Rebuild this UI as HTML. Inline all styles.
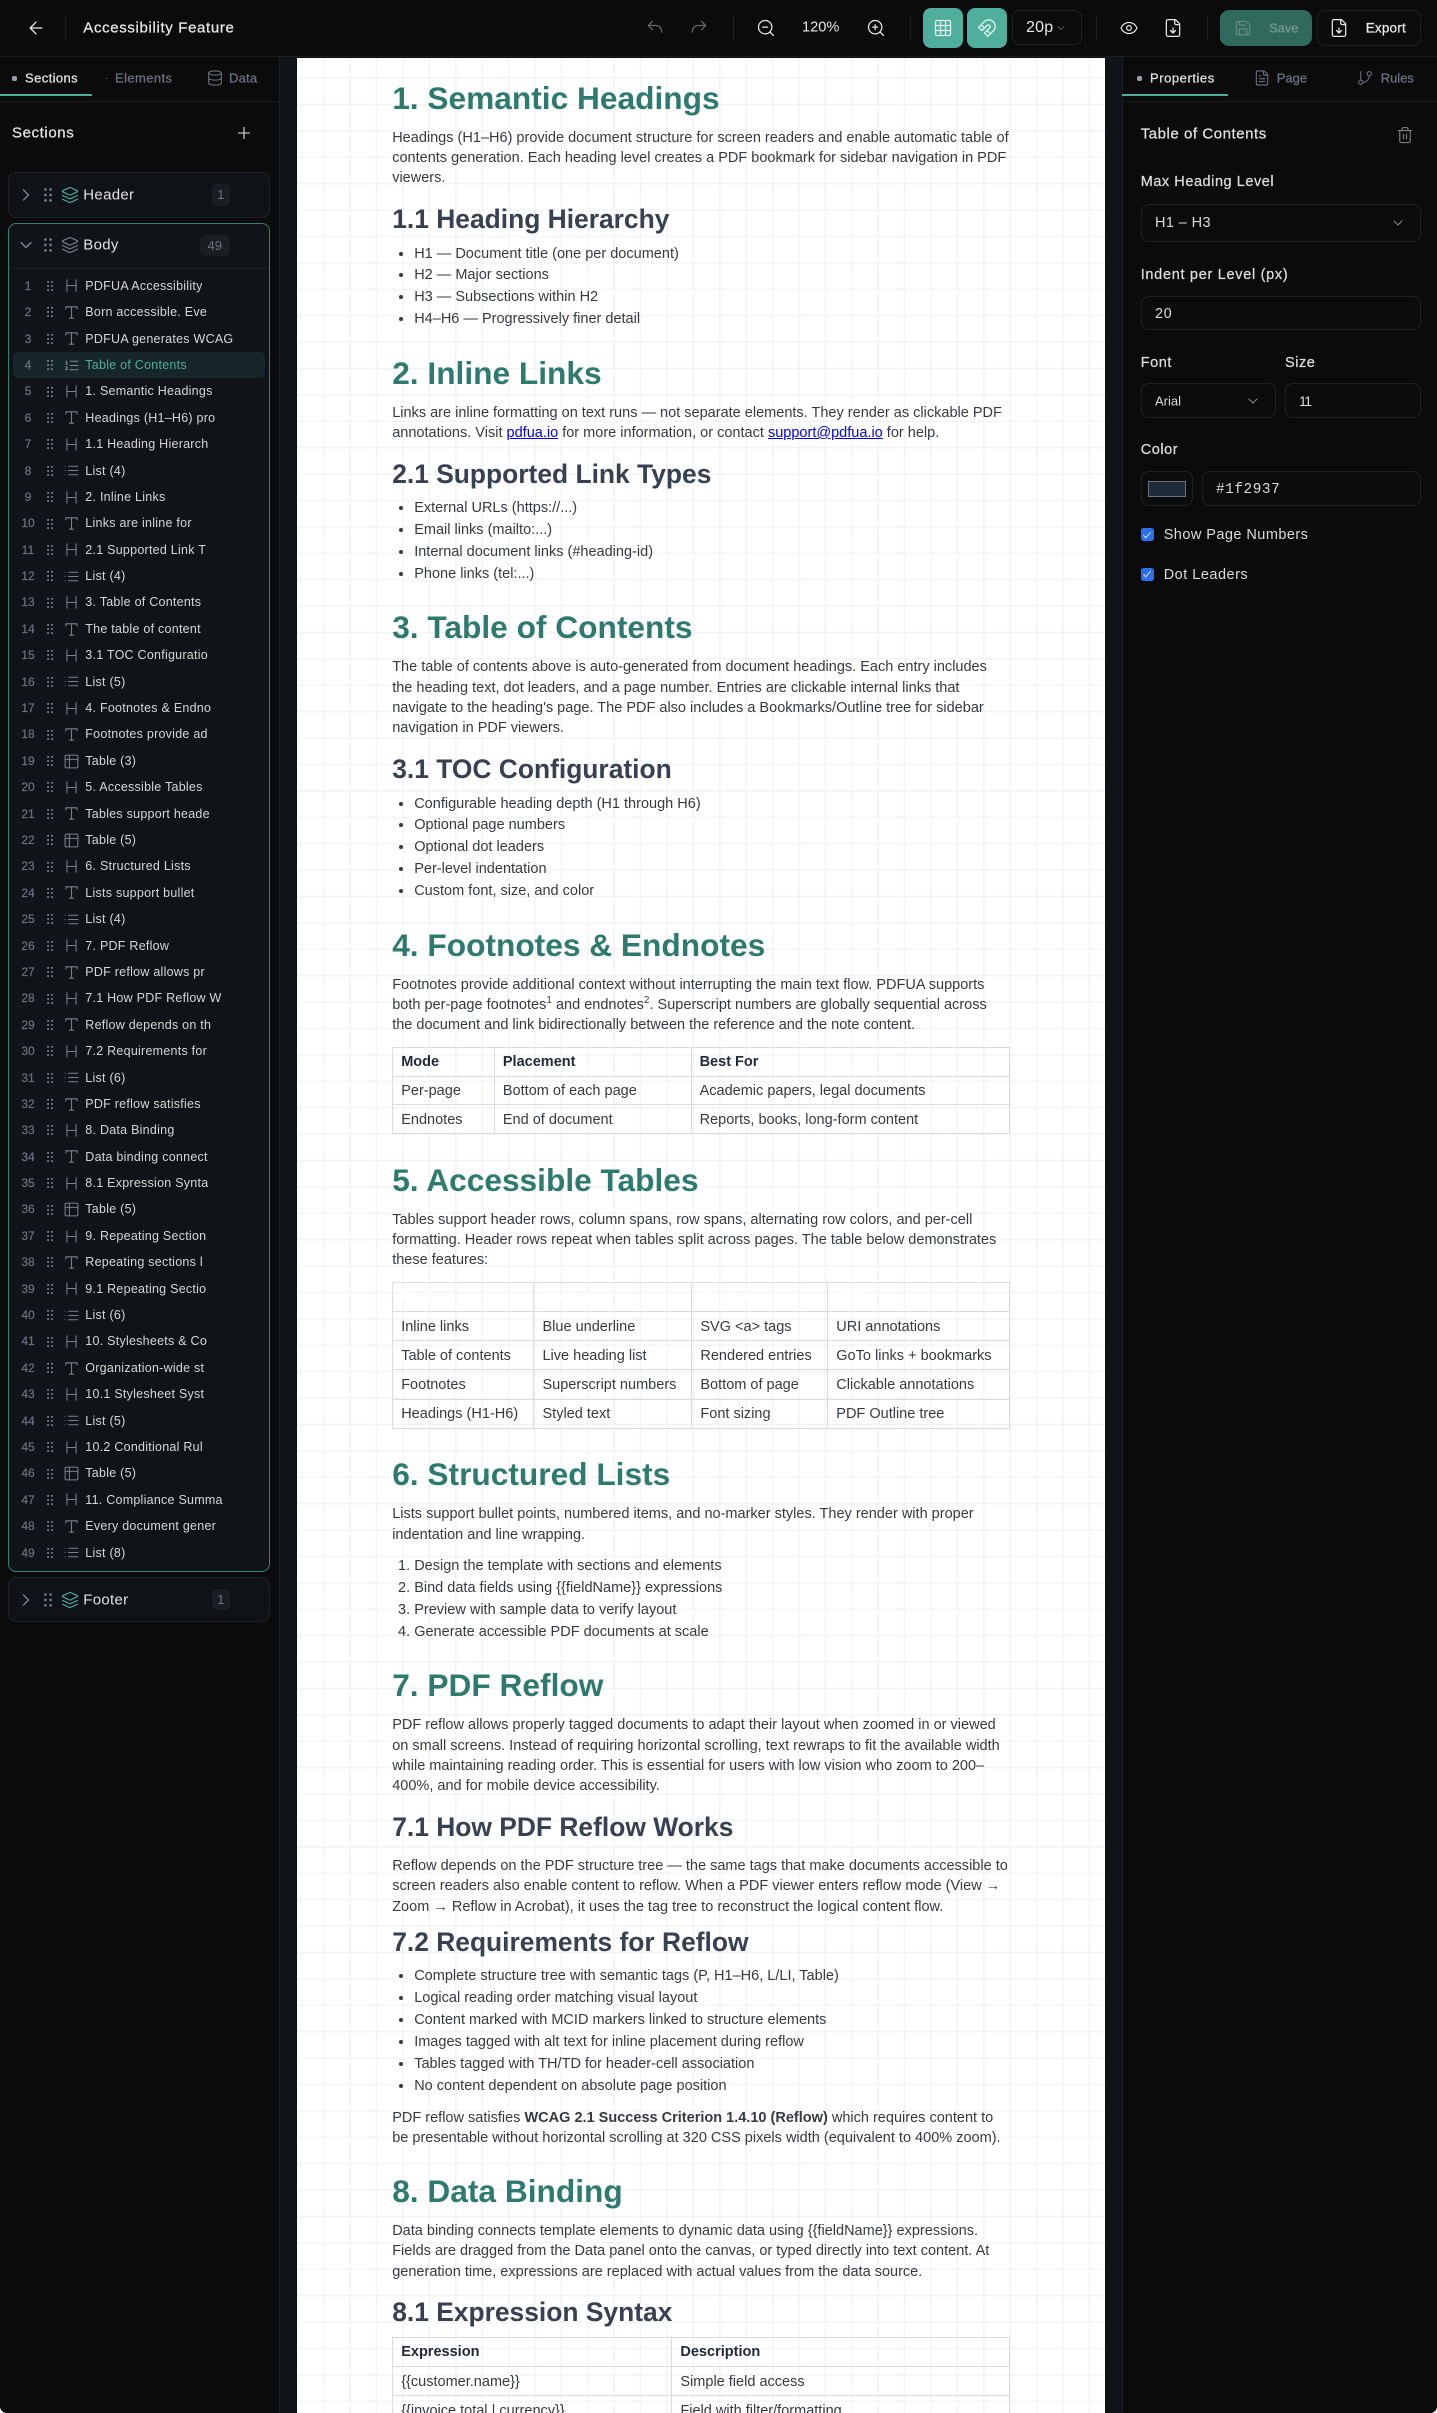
<!DOCTYPE html>
<html lang="en">
<head>
<meta charset="utf-8">
<title>Accessibility Feature</title>
<style>
html,body{margin:0;padding:0;background:#fff}
body{width:1437px;height:2413px;overflow:hidden;font-family:"Liberation Sans",Arial,sans-serif}
#app{position:absolute;left:0;top:0;width:1437px;height:2413px;overflow:hidden;background:#0b0b0c;border-radius:0 0 7px 7px}
.t{position:absolute;white-space:nowrap;transform:translateY(-50%);line-height:1}
.m{-webkit-text-stroke:.25px currentColor}
.i{position:absolute;transform:translate(-50%,-50%);fill:none;stroke:currentColor;stroke-width:1.5;stroke-linecap:round;stroke-linejoin:round;overflow:visible}
.box{position:absolute;box-sizing:border-box}
.fld{position:absolute;box-sizing:border-box;border:1px solid #1f2124;border-radius:8px;background:#0b0b0c}
#canvas{position:absolute;left:297.4px;top:57.5px;width:807.6px;height:2356px;background:#fff;overflow:hidden}
#canvas>svg{position:absolute;left:0;top:0}
#doc{position:absolute;left:94.8px;top:21px;width:618px;font-size:14.52px;line-height:20.4px;color:#353a42;white-space:nowrap}
#doc h1{font-size:31.68px;line-height:38px;margin:22.4px 0 11px;color:#2f7a6e;font-weight:bold}
#doc h2{font-size:26.4px;line-height:32px;margin:14.5px 0 8.3px;color:#374151;font-weight:bold}
#doc p{margin:0 0 11px}
#doc ul,#doc ol{margin:0 0 11px;padding:0 0 0 22px}
#doc li{line-height:21.9px}
#doc a{color:#0000ee;text-decoration:underline}
#doc sup{font-size:10px;line-height:0}
#doc table{border-collapse:collapse;table-layout:fixed;width:618px;margin:11px 0 26.5px}
#doc td,#doc th{border:1.3px solid #d9dbe3;height:29.2px;padding:1px 8px 0;box-sizing:border-box;text-align:left;font-size:14.52px;line-height:18px;overflow:hidden}
#doc table.a td,#doc table.a th{height:28.8px}
#doc th{color:#1f2937;font-weight:bold}
#doc th.w{color:#fff}
#rows{position:absolute;left:0;top:272.8px;width:279px}
.r{height:26.4px;position:relative;color:#d6d6d6;font-size:12.5px;letter-spacing:.25px}
.r b{position:absolute;left:14px;width:28px;text-align:center;top:7px;line-height:13px;font-size:12px;font-weight:normal;letter-spacing:0;color:#6b7280;-webkit-text-stroke:.2px #6b7280}
.r svg.g{position:absolute;left:47px;top:8.2px;width:6px;height:10px;fill:#858a91}
.r svg.k{position:absolute;left:62.5px;top:4.7px;width:17px;height:17px;fill:none;stroke:#7b8087;stroke-width:1.5;stroke-linecap:round;stroke-linejoin:round}
.r span{position:absolute;left:85.3px;top:6px;line-height:14px;white-space:nowrap}
.r.s{color:#4fae9c}
.r.s:before{content:"";position:absolute;left:12.5px;right:14px;top:0;bottom:0;background:#16262a;border-radius:5px}
.r.s svg.k{stroke:#7b8a8d}
.card{position:absolute;left:8px;width:262px;box-sizing:border-box;border:1px solid #1e2125;border-radius:8px;background:#0f1216}
.badge{position:absolute;height:21.5px;background:#1a1e22;border-radius:5px;color:#6b7280;font-size:13px;line-height:21.5px;text-align:center}
.cb{position:absolute;left:1140.7px;width:13px;height:13px;background:#2f6fed;border-radius:2.5px}
.cb svg{position:absolute;left:1.5px;top:1.5px;width:10px;height:10px;fill:none;stroke:#fff;stroke-width:2;stroke-linecap:round;stroke-linejoin:round}
</style>
</head>
<body>
<svg width="0" height="0" style="position:absolute">
<symbol id="back" viewBox="0 0 24 24"><path d="M19 12H5M12 19l-7-7 7-7"/></symbol>
<symbol id="undo" viewBox="0 0 24 24"><path d="M9 14 4 9l5-5"/><path d="M4 9h9a7 7 0 0 1 7 7v1"/></symbol>
<symbol id="redo" viewBox="0 0 24 24"><path d="m15 14 5-5-5-5"/><path d="M20 9h-9a7 7 0 0 0-7 7v1"/></symbol>
<symbol id="zout" viewBox="0 0 24 24"><circle cx="11" cy="11" r="8"/><path d="m21 21-4.3-4.3M8 11h6"/></symbol>
<symbol id="zin" viewBox="0 0 24 24"><circle cx="11" cy="11" r="8"/><path d="m21 21-4.3-4.3M8 11h6M11 8v6"/></symbol>
<symbol id="grid" viewBox="0 0 24 24"><rect x="3" y="3" width="18" height="18" rx="2"/><path d="M3 9h18M3 15h18M9 3v18M15 3v18"/></symbol>
<symbol id="magnet" viewBox="0 0 24 24"><path d="m6 15-4-4 6.75-6.77a7.79 7.79 0 0 1 11 11L13 22l-4-4 6.39-6.36a2.14 2.14 0 0 0-3-3L6 15"/><path d="m5 8 4 4M12 15l4 4"/></symbol>
<symbol id="eye" viewBox="0 0 24 24"><path d="M2.062 12.348a1 1 0 0 1 0-.696 10.75 10.75 0 0 1 19.876 0 1 1 0 0 1 0 .696 10.75 10.75 0 0 1-19.876 0"/><circle cx="12" cy="12" r="3"/></symbol>
<symbol id="fdown" viewBox="0 0 24 24"><path d="M15 2H6a2 2 0 0 0-2 2v16a2 2 0 0 0 2 2h12a2 2 0 0 0 2-2V7Z"/><path d="M14 2v4a2 2 0 0 0 2 2h4M12 18v-6M9 15l3 3 3-3"/></symbol>
<symbol id="save" viewBox="0 0 24 24"><path d="M15.2 3a2 2 0 0 1 1.4.6l3.8 3.8a2 2 0 0 1 .6 1.4V19a2 2 0 0 1-2 2H5a2 2 0 0 1-2-2V5a2 2 0 0 1 2-2z"/><path d="M17 21v-7a1 1 0 0 0-1-1H8a1 1 0 0 0-1 1v7M7 3v4a1 1 0 0 0 1 1h7"/></symbol>
<symbol id="db" viewBox="0 0 24 24"><ellipse cx="12" cy="5" rx="9" ry="3"/><path d="M3 5V19A9 3 0 0 0 21 19V5M3 12A9 3 0 0 0 21 12"/></symbol>
<symbol id="plus" viewBox="0 0 24 24"><path d="M5 12h14M12 5v14"/></symbol>
<symbol id="cr" viewBox="0 0 24 24"><path d="m9 18 6-6-6-6"/></symbol>
<symbol id="cd" viewBox="0 0 24 24"><path d="m6 9 6 6 6-6"/></symbol>
<symbol id="layers" viewBox="0 0 24 24"><path d="m12.83 2.18a2 2 0 0 0-1.66 0L2.6 6.08a1 1 0 0 0 0 1.83l8.58 3.91a2 2 0 0 0 1.66 0l8.58-3.9a1 1 0 0 0 0-1.83z"/><path d="m22 17.65-9.17 4.16a2 2 0 0 1-1.66 0L2 17.65M22 12.65l-9.17 4.16a2 2 0 0 1-1.66 0L2 12.65"/></symbol>
<symbol id="grip" viewBox="0 0 6 10"><rect x=".2" y="0" width="1.7" height="1.7"/><rect x="4.1" y="0" width="1.7" height="1.7"/><rect x=".2" y="4.1" width="1.7" height="1.7"/><rect x="4.1" y="4.1" width="1.7" height="1.7"/><rect x=".2" y="8.2" width="1.7" height="1.7"/><rect x="4.1" y="8.2" width="1.7" height="1.7"/></symbol>
<symbol id="h" viewBox="0 0 24 24"><path d="M5.5 12h13M5.5 20V4M18.5 20V4"/></symbol>
<symbol id="ty" viewBox="0 0 24 24"><path d="M4 7V4h16v3M9 20h6M12 4v16"/></symbol>
<symbol id="li" viewBox="0 0 24 24"><path d="M3 12h.01M3 18h.01M3 6h.01M8 12h13M8 18h13M8 6h13"/></symbol>
<symbol id="ol" viewBox="0 0 24 24"><path d="M10 12h11M10 18h11M10 6h11M4 10h2M4 6h1v4M6 18H4c0-1 2-2 2-3s-1-1.5-2-1"/></symbol>
<symbol id="tb" viewBox="0 0 24 24"><path d="M9 3H5a2 2 0 0 0-2 2v4m6-6h10a2 2 0 0 1 2 2v4M9 3v18m0 0h10a2 2 0 0 0 2-2V9M9 21H5a2 2 0 0 1-2-2V9m0 0h18"/></symbol>
<symbol id="ftext" viewBox="0 0 24 24"><path d="M15 2H6a2 2 0 0 0-2 2v16a2 2 0 0 0 2 2h12a2 2 0 0 0 2-2V7Z"/><path d="M14 2v4a2 2 0 0 0 2 2h4M10 9H8M16 13H8M16 17H8"/></symbol>
<symbol id="branch" viewBox="0 0 24 24"><path d="M6 3v12"/><circle cx="18" cy="6" r="3"/><circle cx="6" cy="18" r="3"/><path d="M18 9a9 9 0 0 1-9 9"/></symbol>
<symbol id="trash" viewBox="0 0 24 24"><path d="M3 6h18M19 6v14c0 1-1 2-2 2H7c-1 0-2-1-2-2V6M8 6V4c0-1 1-2 2-2h4c1 0 2 1 2 2v2M10 11v6M14 11v6"/></symbol>
</svg>

<div id="app">

<!-- canvas -->
<div class="box" style="left:279px;top:57px;width:18.4px;height:2356px;background:#0f1418"></div>
<div class="box" style="left:1105px;top:57px;width:17.3px;height:2356px;background:#0f1418"></div>
<div id="canvas">
<svg width="808" height="2356"><defs><pattern id="gp" width="26.4" height="26.4" patternUnits="userSpaceOnUse" x="-0.4" y="-7.1"><path d="M0 0H26.4M0 0V26.4" stroke="#f4f4f6" stroke-width="3.2" fill="none"/></pattern></defs><rect width="808" height="2356" fill="url(#gp)"/></svg>
<div id="doc">
<h1 style="margin-top:0">1. Semantic Headings</h1>
<p>Headings (H1–H6) provide document structure for screen readers and enable automatic table of<br>contents generation. Each heading level creates a PDF bookmark for sidebar navigation in PDF<br>viewers.</p>
<h2>1.1 Heading Hierarchy</h2>
<ul><li>H1 — Document title (one per document)</li><li>H2 — Major sections</li><li>H3 — Subsections within H2</li><li>H4–H6 — Progressively finer detail</li></ul>
<h1>2. Inline Links</h1>
<p>Links are inline formatting on text runs — not separate elements. They render as clickable PDF<br>annotations. Visit <a>pdfua.io</a> for more information, or contact <a>support@pdfua.io</a> for help.</p>
<h2>2.1 Supported Link Types</h2>
<ul><li>External URLs (https://...)</li><li>Email links (mailto:...)</li><li>Internal document links (#heading-id)</li><li>Phone links (tel:...)</li></ul>
<h1>3. Table of Contents</h1>
<p>The table of contents above is auto-generated from document headings. Each entry includes<br>the heading text, dot leaders, and a page number. Entries are clickable internal links that<br>navigate to the heading's page. The PDF also includes a Bookmarks/Outline tree for sidebar<br>navigation in PDF viewers.</p>
<h2>3.1 TOC Configuration</h2>
<ul><li>Configurable heading depth (H1 through H6)</li><li>Optional page numbers</li><li>Optional dot leaders</li><li>Per-level indentation</li><li>Custom font, size, and color</li></ul>
<h1>4. Footnotes &amp; Endnotes</h1>
<p>Footnotes provide additional context without interrupting the main text flow. PDFUA supports<br>both per-page footnotes<sup>1</sup> and endnotes<sup>2</sup>. Superscript numbers are globally sequential across<br>the document and link bidirectionally between the reference and the note content.</p>
<table class="a">
<colgroup><col style="width:101.7px"><col style="width:196.7px"><col></colgroup>
<tr><th>Mode</th><th>Placement</th><th>Best For</th></tr>
<tr><td>Per-page</td><td>Bottom of each page</td><td>Academic papers, legal documents</td></tr>
<tr><td>Endnotes</td><td>End of document</td><td>Reports, books, long-form content</td></tr>
</table>
<h1>5. Accessible Tables</h1>
<p>Tables support header rows, column spans, row spans, alternating row colors, and per-cell<br>formatting. Header rows repeat when tables split across pages. The table below demonstrates<br>these features:</p>
<table>
<colgroup><col style="width:141.3px"><col style="width:157.9px"><col style="width:135.9px"><col></colgroup>
<tr><th class="w">Feature</th><th class="w">Markup</th><th class="w">Render</th><th class="w">PDF</th></tr>
<tr><td>Inline links</td><td>Blue underline</td><td>SVG &lt;a&gt; tags</td><td>URI annotations</td></tr>
<tr><td>Table of contents</td><td>Live heading list</td><td>Rendered entries</td><td>GoTo links + bookmarks</td></tr>
<tr><td>Footnotes</td><td>Superscript numbers</td><td>Bottom of page</td><td>Clickable annotations</td></tr>
<tr><td>Headings (H1-H6)</td><td>Styled text</td><td>Font sizing</td><td>PDF Outline tree</td></tr>
</table>
<h1>6. Structured Lists</h1>
<p>Lists support bullet points, numbered items, and no-marker styles. They render with proper<br>indentation and line wrapping.</p>
<ol><li>Design the template with sections and elements</li><li>Bind data fields using {{fieldName}} expressions</li><li>Preview with sample data to verify layout</li><li>Generate accessible PDF documents at scale</li></ol>
<h1>7. PDF Reflow</h1>
<p>PDF reflow allows properly tagged documents to adapt their layout when zoomed in or viewed<br>on small screens. Instead of requiring horizontal scrolling, text rewraps to fit the available width<br>while maintaining reading order. This is essential for users with low vision who zoom to 200–<br>400%, and for mobile device accessibility.</p>
<h2>7.1 How PDF Reflow Works</h2>
<p style="margin-top:12.5px;margin-bottom:6px">Reflow depends on the PDF structure tree — the same tags that make documents accessible to<br>screen readers also enable content to reflow. When a PDF viewer enters reflow mode (View →<br>Zoom → Reflow in Acrobat), it uses the tag tree to reconstruct the logical content flow.</p>
<h2 style="margin-top:8.9px">7.2 Requirements for Reflow</h2>
<ul style="margin-bottom:10px"><li>Complete structure tree with semantic tags (P, H1–H6, L/LI, Table)</li><li>Logical reading order matching visual layout</li><li>Content marked with MCID markers linked to structure elements</li><li>Images tagged with alt text for inline placement during reflow</li><li>Tables tagged with TH/TD for header-cell association</li><li>No content dependent on absolute page position</li></ul>
<p style="margin-bottom:12px">PDF reflow satisfies <b>WCAG 2.1 Success Criterion 1.4.10 (Reflow)</b> which requires content to<br>be presentable without horizontal scrolling at 320 CSS pixels width (equivalent to 400% zoom).</p>
<h1 style="margin-top:23.4px">8. Data Binding</h1>
<p>Data binding connects template elements to dynamic data using {{fieldName}} expressions.<br>Fields are dragged from the Data panel onto the canvas, or typed directly into text content. At<br>generation time, expressions are replaced with actual values from the data source.</p>
<h2>8.1 Expression Syntax</h2>
<table style="margin-top:6px">
<colgroup><col style="width:279.2px"><col></colgroup>
<tr><th>Expression</th><th>Description</th></tr>
<tr><td>{{customer.name}}</td><td>Simple field access</td></tr>
<tr><td>{{invoice.total | currency}}</td><td>Field with filter/formatting</td></tr>
</table>
</div>
</div>

<!-- top bar -->
<div class="box" style="left:0;top:0;width:1437px;height:57px;background:#0b0b0c;border-bottom:1px solid #1b1c1e"></div>
<svg class="i" style="left:35.7px;top:28px;width:20px;height:20px;color:#eaeaea"><use href="#back"/></svg>
<div class="box" style="left:64.5px;top:15px;width:1px;height:26px;background:#1c1d1f"></div>
<div class="t m" style="left:83.3px;top:28px;font-size:15px;letter-spacing:.65px;color:#e8e8e8">Accessibility Feature</div>
<svg class="i" style="left:655px;top:28px;width:20px;height:20px;color:#666"><use href="#undo"/></svg>
<svg class="i" style="left:699px;top:28px;width:20px;height:20px;color:#666"><use href="#redo"/></svg>
<div class="box" style="left:732.5px;top:15px;width:1px;height:26px;background:#1c1d1f"></div>
<svg class="i" style="left:766px;top:28px;width:20px;height:20px;color:#e8e8e8"><use href="#zout"/></svg>
<div class="t" style="left:802px;top:28px;font-size:14.6px;color:#e8e8e8">120%</div>
<svg class="i" style="left:876px;top:28px;width:20px;height:20px;color:#e8e8e8"><use href="#zin"/></svg>
<div class="box" style="left:909.5px;top:15px;width:1px;height:26px;background:#1c1d1f"></div>
<div class="box" style="left:923.3px;top:8px;width:40px;height:40px;background:#4fae9c;border-radius:8px"></div>
<svg class="i" style="left:943.3px;top:28px;width:20px;height:20px;color:#e6f4f1"><use href="#grid"/></svg>
<div class="box" style="left:967.3px;top:8px;width:40px;height:40px;background:#4fae9c;border-radius:8px"></div>
<svg class="i" style="left:987.3px;top:28px;width:20px;height:20px;color:#e6f4f1"><use href="#magnet"/></svg>
<div class="fld" style="left:1011.7px;top:10.3px;width:70px;height:35px"></div>
<div class="t" style="left:1026px;top:28px;font-size:16px;letter-spacing:.2px;color:#e8e8e8">20p</div>
<svg class="i" style="left:1060.7px;top:28px;width:12px;height:12px;color:#777"><use href="#cd"/></svg>
<div class="box" style="left:1095.5px;top:15px;width:1px;height:26px;background:#1c1d1f"></div>
<svg class="i" style="left:1129.3px;top:28px;width:19px;height:19px;color:#e8e8e8"><use href="#eye"/></svg>
<svg class="i" style="left:1173px;top:28px;width:20px;height:20px;color:#e8e8e8"><use href="#fdown"/></svg>
<div class="box" style="left:1206.5px;top:15px;width:1px;height:26px;background:#1c1d1f"></div>
<div class="box" style="left:1220.3px;top:10.3px;width:91.4px;height:35.4px;background:#2f6a5d;border-radius:9px"></div>
<svg class="i" style="left:1242.7px;top:28px;width:18px;height:18px;color:#6c8f86"><use href="#save"/></svg>
<div class="t m" style="left:1269px;top:28px;font-size:13px;color:#76978e">Save</div>
<div class="fld" style="left:1316.7px;top:10.3px;width:104px;height:35.4px"></div>
<svg class="i" style="left:1339.3px;top:28px;width:20px;height:20px;color:#e8e8e8"><use href="#fdown"/></svg>
<div class="t m" style="left:1365.7px;top:28px;font-size:13.5px;letter-spacing:.2px;color:#e8e8e8">Export</div>

<!-- left panel -->
<div class="box" style="left:0;top:57px;width:280px;height:2356px;background:#0b0b0c;border-right:1px solid #1a1c1f"></div>
<div class="box" style="left:0;top:100.5px;width:279px;height:1px;background:#1b1c1e"></div>
<div class="box" style="left:0;top:93.5px;width:92px;height:2px;background:#4fae9c"></div>
<div class="box" style="left:12px;top:75.5px;width:5px;height:5px;background:#9aa0a6;border-radius:2px"></div>
<div class="t m" style="left:25px;top:78px;font-size:13px;letter-spacing:.4px;color:#e2e2e2">Sections</div>
<div class="box" style="left:105.5px;top:77.5px;width:1.5px;height:1.5px;background:#6b7280"></div>
<div class="t m" style="left:115px;top:78px;font-size:13px;letter-spacing:.4px;color:#6b7280">Elements</div>
<svg class="i" style="left:214.7px;top:78px;width:17px;height:17px;color:#6b7280"><use href="#db"/></svg>
<div class="t m" style="left:229px;top:78px;font-size:13px;letter-spacing:.2px;color:#6b7280">Data</div>
<div class="t m" style="left:12px;top:132.5px;font-size:15px;letter-spacing:.6px;color:#e2e2e2">Sections</div>
<svg class="i" style="left:244px;top:132.5px;width:19px;height:19px;stroke-width:1.4;color:#e2e2e2"><use href="#plus"/></svg>

<div class="card" style="top:172px;height:45.5px"></div>
<svg class="i" style="left:25.5px;top:195px;width:20px;height:20px;color:#858a91"><use href="#cr"/></svg>
<svg class="i" style="left:48px;top:195px;width:8px;height:13.5px;fill:#858a91;stroke:none"><use href="#grip"/></svg>
<svg class="i" style="left:70px;top:195px;width:18px;height:18px;color:#4fae9c"><use href="#layers"/></svg>
<div class="t" style="left:83.3px;top:195px;font-size:15px;letter-spacing:.3px;color:#e2e2e2">Header</div>
<div class="badge" style="left:212px;top:184px;width:17.5px">1</div>

<div class="card" style="top:223px;height:1349px;border-color:#2f8473;background:#101418"></div>
<div class="box" style="left:9px;top:267.5px;width:260px;height:1px;background:#1c2024"></div>
<svg class="i" style="left:25.5px;top:245px;width:20px;height:20px;color:#858a91"><use href="#cd"/></svg>
<svg class="i" style="left:48px;top:245px;width:8px;height:13.5px;fill:#858a91;stroke:none"><use href="#grip"/></svg>
<svg class="i" style="left:70px;top:245px;width:18px;height:18px;color:#7b8087"><use href="#layers"/></svg>
<div class="t" style="left:83.3px;top:245px;font-size:15px;letter-spacing:.3px;color:#e2e2e2">Body</div>
<div class="badge" style="left:200px;top:234.5px;width:29.5px">49</div>

<div id="rows">
<div class="r"><b>1</b><svg class="g"><use href="#grip"/></svg><svg class="k"><use href="#h"/></svg><span>PDFUA Accessibility</span></div>
<div class="r"><b>2</b><svg class="g"><use href="#grip"/></svg><svg class="k"><use href="#ty"/></svg><span>Born accessible. Eve</span></div>
<div class="r"><b>3</b><svg class="g"><use href="#grip"/></svg><svg class="k"><use href="#ty"/></svg><span>PDFUA generates WCAG</span></div>
<div class="r s"><b>4</b><svg class="g"><use href="#grip"/></svg><svg class="k"><use href="#ol"/></svg><span>Table of Contents</span></div>
<div class="r"><b>5</b><svg class="g"><use href="#grip"/></svg><svg class="k"><use href="#h"/></svg><span>1. Semantic Headings</span></div>
<div class="r"><b>6</b><svg class="g"><use href="#grip"/></svg><svg class="k"><use href="#ty"/></svg><span>Headings (H1–H6) pro</span></div>
<div class="r"><b>7</b><svg class="g"><use href="#grip"/></svg><svg class="k"><use href="#h"/></svg><span>1.1 Heading Hierarch</span></div>
<div class="r"><b>8</b><svg class="g"><use href="#grip"/></svg><svg class="k"><use href="#li"/></svg><span>List (4)</span></div>
<div class="r"><b>9</b><svg class="g"><use href="#grip"/></svg><svg class="k"><use href="#h"/></svg><span>2. Inline Links</span></div>
<div class="r"><b>10</b><svg class="g"><use href="#grip"/></svg><svg class="k"><use href="#ty"/></svg><span>Links are inline for</span></div>
<div class="r"><b>11</b><svg class="g"><use href="#grip"/></svg><svg class="k"><use href="#h"/></svg><span>2.1 Supported Link T</span></div>
<div class="r"><b>12</b><svg class="g"><use href="#grip"/></svg><svg class="k"><use href="#li"/></svg><span>List (4)</span></div>
<div class="r"><b>13</b><svg class="g"><use href="#grip"/></svg><svg class="k"><use href="#h"/></svg><span>3. Table of Contents</span></div>
<div class="r"><b>14</b><svg class="g"><use href="#grip"/></svg><svg class="k"><use href="#ty"/></svg><span>The table of content</span></div>
<div class="r"><b>15</b><svg class="g"><use href="#grip"/></svg><svg class="k"><use href="#h"/></svg><span>3.1 TOC Configuratio</span></div>
<div class="r"><b>16</b><svg class="g"><use href="#grip"/></svg><svg class="k"><use href="#li"/></svg><span>List (5)</span></div>
<div class="r"><b>17</b><svg class="g"><use href="#grip"/></svg><svg class="k"><use href="#h"/></svg><span>4. Footnotes &amp; Endno</span></div>
<div class="r"><b>18</b><svg class="g"><use href="#grip"/></svg><svg class="k"><use href="#ty"/></svg><span>Footnotes provide ad</span></div>
<div class="r"><b>19</b><svg class="g"><use href="#grip"/></svg><svg class="k"><use href="#tb"/></svg><span>Table (3)</span></div>
<div class="r"><b>20</b><svg class="g"><use href="#grip"/></svg><svg class="k"><use href="#h"/></svg><span>5. Accessible Tables</span></div>
<div class="r"><b>21</b><svg class="g"><use href="#grip"/></svg><svg class="k"><use href="#ty"/></svg><span>Tables support heade</span></div>
<div class="r"><b>22</b><svg class="g"><use href="#grip"/></svg><svg class="k"><use href="#tb"/></svg><span>Table (5)</span></div>
<div class="r"><b>23</b><svg class="g"><use href="#grip"/></svg><svg class="k"><use href="#h"/></svg><span>6. Structured Lists</span></div>
<div class="r"><b>24</b><svg class="g"><use href="#grip"/></svg><svg class="k"><use href="#ty"/></svg><span>Lists support bullet</span></div>
<div class="r"><b>25</b><svg class="g"><use href="#grip"/></svg><svg class="k"><use href="#li"/></svg><span>List (4)</span></div>
<div class="r"><b>26</b><svg class="g"><use href="#grip"/></svg><svg class="k"><use href="#h"/></svg><span>7. PDF Reflow</span></div>
<div class="r"><b>27</b><svg class="g"><use href="#grip"/></svg><svg class="k"><use href="#ty"/></svg><span>PDF reflow allows pr</span></div>
<div class="r"><b>28</b><svg class="g"><use href="#grip"/></svg><svg class="k"><use href="#h"/></svg><span>7.1 How PDF Reflow W</span></div>
<div class="r"><b>29</b><svg class="g"><use href="#grip"/></svg><svg class="k"><use href="#ty"/></svg><span>Reflow depends on th</span></div>
<div class="r"><b>30</b><svg class="g"><use href="#grip"/></svg><svg class="k"><use href="#h"/></svg><span>7.2 Requirements for</span></div>
<div class="r"><b>31</b><svg class="g"><use href="#grip"/></svg><svg class="k"><use href="#li"/></svg><span>List (6)</span></div>
<div class="r"><b>32</b><svg class="g"><use href="#grip"/></svg><svg class="k"><use href="#ty"/></svg><span>PDF reflow satisfies</span></div>
<div class="r"><b>33</b><svg class="g"><use href="#grip"/></svg><svg class="k"><use href="#h"/></svg><span>8. Data Binding</span></div>
<div class="r"><b>34</b><svg class="g"><use href="#grip"/></svg><svg class="k"><use href="#ty"/></svg><span>Data binding connect</span></div>
<div class="r"><b>35</b><svg class="g"><use href="#grip"/></svg><svg class="k"><use href="#h"/></svg><span>8.1 Expression Synta</span></div>
<div class="r"><b>36</b><svg class="g"><use href="#grip"/></svg><svg class="k"><use href="#tb"/></svg><span>Table (5)</span></div>
<div class="r"><b>37</b><svg class="g"><use href="#grip"/></svg><svg class="k"><use href="#h"/></svg><span>9. Repeating Section</span></div>
<div class="r"><b>38</b><svg class="g"><use href="#grip"/></svg><svg class="k"><use href="#ty"/></svg><span>Repeating sections l</span></div>
<div class="r"><b>39</b><svg class="g"><use href="#grip"/></svg><svg class="k"><use href="#h"/></svg><span>9.1 Repeating Sectio</span></div>
<div class="r"><b>40</b><svg class="g"><use href="#grip"/></svg><svg class="k"><use href="#li"/></svg><span>List (6)</span></div>
<div class="r"><b>41</b><svg class="g"><use href="#grip"/></svg><svg class="k"><use href="#h"/></svg><span>10. Stylesheets &amp; Co</span></div>
<div class="r"><b>42</b><svg class="g"><use href="#grip"/></svg><svg class="k"><use href="#ty"/></svg><span>Organization-wide st</span></div>
<div class="r"><b>43</b><svg class="g"><use href="#grip"/></svg><svg class="k"><use href="#h"/></svg><span>10.1 Stylesheet Syst</span></div>
<div class="r"><b>44</b><svg class="g"><use href="#grip"/></svg><svg class="k"><use href="#li"/></svg><span>List (5)</span></div>
<div class="r"><b>45</b><svg class="g"><use href="#grip"/></svg><svg class="k"><use href="#h"/></svg><span>10.2 Conditional Rul</span></div>
<div class="r"><b>46</b><svg class="g"><use href="#grip"/></svg><svg class="k"><use href="#tb"/></svg><span>Table (5)</span></div>
<div class="r"><b>47</b><svg class="g"><use href="#grip"/></svg><svg class="k"><use href="#h"/></svg><span>11. Compliance Summa</span></div>
<div class="r"><b>48</b><svg class="g"><use href="#grip"/></svg><svg class="k"><use href="#ty"/></svg><span>Every document gener</span></div>
<div class="r"><b>49</b><svg class="g"><use href="#grip"/></svg><svg class="k"><use href="#li"/></svg><span>List (8)</span></div>
</div>

<div class="card" style="top:1576.7px;height:45.5px"></div>
<svg class="i" style="left:25.5px;top:1599.5px;width:20px;height:20px;color:#858a91"><use href="#cr"/></svg>
<svg class="i" style="left:48px;top:1599.5px;width:8px;height:13.5px;fill:#858a91;stroke:none"><use href="#grip"/></svg>
<svg class="i" style="left:70px;top:1599.5px;width:18px;height:18px;color:#4fae9c"><use href="#layers"/></svg>
<div class="t" style="left:83.3px;top:1599.5px;font-size:15px;letter-spacing:.3px;color:#e2e2e2">Footer</div>
<div class="badge" style="left:212px;top:1588.5px;width:17.5px">1</div>

<!-- right panel -->
<div class="box" style="left:1122px;top:57px;width:315px;height:2356px;background:#0b0b0c;border-left:1px solid #1a1c1f"></div>
<div class="box" style="left:1123px;top:100.5px;width:314px;height:1px;background:#1b1c1e"></div>
<div class="box" style="left:1122.3px;top:93.5px;width:105.7px;height:2px;background:#4fae9c"></div>
<div class="box" style="left:1137px;top:75.5px;width:5px;height:5px;background:#9aa0a6;border-radius:2px"></div>
<div class="t m" style="left:1150px;top:78px;font-size:13px;letter-spacing:.55px;color:#e2e2e2">Properties</div>
<svg class="i" style="left:1262px;top:78px;width:17px;height:17px;color:#6b7280"><use href="#ftext"/></svg>
<div class="t m" style="left:1276.7px;top:78px;font-size:13px;color:#6b7280">Page</div>
<svg class="i" style="left:1365.3px;top:78px;width:17px;height:17px;color:#6b7280"><use href="#branch"/></svg>
<div class="t m" style="left:1380.7px;top:78px;font-size:13px;color:#6b7280">Rules</div>

<div class="t m" style="left:1140.7px;top:134px;font-size:15px;letter-spacing:.55px;color:#e2e2e2">Table of Contents</div>
<svg class="i" style="left:1405px;top:134.5px;width:18px;height:18px;color:#7b8087"><use href="#trash"/></svg>

<div class="t m" style="left:1140.7px;top:182.2px;font-size:14.5px;letter-spacing:.55px;color:#dcdcdc">Max Heading Level</div>
<div class="fld" style="left:1140.7px;top:203.6px;width:280px;height:38.5px"></div>
<div class="t" style="left:1155px;top:222.5px;font-size:14.5px;letter-spacing:.4px;color:#dcdcdc">H1 – H3</div>
<svg class="i" style="left:1397.7px;top:222.5px;width:16px;height:16px;color:#858a91"><use href="#cd"/></svg>

<div class="t m" style="left:1140.7px;top:274.8px;font-size:14.5px;letter-spacing:.7px;color:#dcdcdc">Indent per Level (px)</div>
<div class="fld" style="left:1140.7px;top:296.4px;width:280px;height:34px"></div>
<div class="t" style="left:1155px;top:313.5px;font-size:14.5px;letter-spacing:.5px;color:#dcdcdc">20</div>

<div class="t m" style="left:1140.7px;top:362.6px;font-size:14.5px;letter-spacing:.55px;color:#dcdcdc">Font</div>
<div class="t m" style="left:1285px;top:362.6px;font-size:14.5px;letter-spacing:.55px;color:#dcdcdc">Size</div>
<div class="fld" style="left:1140.7px;top:383px;width:135px;height:35px"></div>
<div class="t" style="left:1155px;top:400.5px;font-size:13px;color:#dcdcdc">Arial</div>
<svg class="i" style="left:1253px;top:400.5px;width:16px;height:16px;color:#858a91"><use href="#cd"/></svg>
<div class="fld" style="left:1285px;top:383px;width:135.7px;height:35px"></div>
<div class="t" style="left:1299px;top:400.5px;font-size:14px;letter-spacing:-1.5px;color:#dcdcdc">11</div>

<div class="t m" style="left:1140.7px;top:450.4px;font-size:14.5px;letter-spacing:.55px;color:#dcdcdc">Color</div>
<div class="fld" style="left:1140.7px;top:471.4px;width:52px;height:35px"></div>
<div class="box" style="left:1148px;top:481.4px;width:37.7px;height:15.4px;background:#1f2937;border:1px solid #6b7280"></div>
<div class="fld" style="left:1202.3px;top:471.4px;width:218.4px;height:35px"></div>
<div class="t" style="left:1216px;top:490px;font-family:'Liberation Mono',monospace;font-size:14.4px;letter-spacing:.55px;color:#dcdcdc">#1f2937</div>

<div class="cb" style="top:528px"><svg viewBox="0 0 24 24"><path d="M4 13l5 6L20 6"/></svg></div>
<div class="t" style="left:1163.7px;top:535.2px;font-size:14.5px;letter-spacing:.45px;color:#dcdcdc">Show Page Numbers</div>
<div class="cb" style="top:567.8px"><svg viewBox="0 0 24 24"><path d="M4 13l5 6L20 6"/></svg></div>
<div class="t" style="left:1163.7px;top:574.8px;font-size:14.5px;letter-spacing:.5px;color:#dcdcdc">Dot Leaders</div>

</div>
</body>
</html>
